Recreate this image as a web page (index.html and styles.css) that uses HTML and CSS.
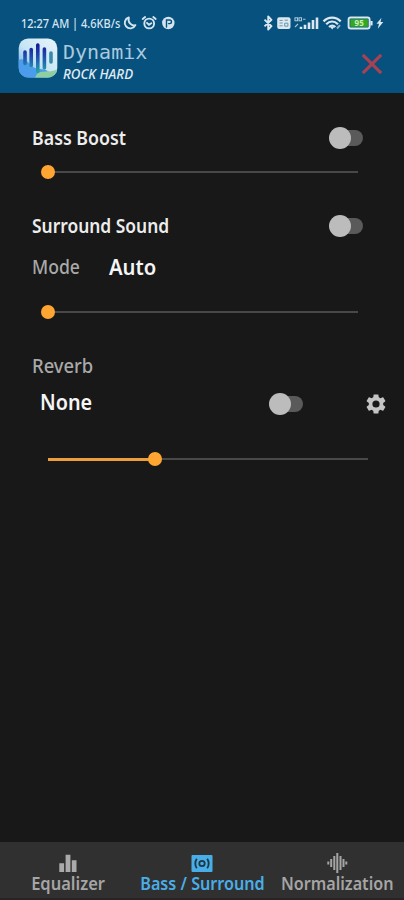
FILE: index.html
```html
<!DOCTYPE html>
<html lang="en">
<head>
<meta charset="utf-8">
<meta name="viewport" content="width=device-width">
<title>Dynamix</title>
<link rel="stylesheet" href="styles.css">
</head>
<body>
<div class="app">
  <header class="header">
    <div class="status">
      <span class="time"><span class="label">12:27 AM | 4.6KB/s</span></span>
      <svg class="left-icons" width="54" height="16" viewBox="0 0 54 16" fill="none" stroke="#d5e5ef" stroke-width="1.9" stroke-linecap="round">
        <path d="M5.8 2.4A5.6 5.6 0 1 0 12.4 10.2C8.6 11.6 4.6 7.5 5.8 2.4Z" stroke-linejoin="round"/>
        <circle cx="26.2" cy="8.5" r="4.9"/><path d="M24 7.8l2 2 2.3-1.5M19.7 4l2.4-2M32.7 4l-2.4-2"/>
        <circle cx="45.3" cy="8" r="6.2" fill="#d5e5ef" stroke="none"/><path d="M43.5 12V5h3.2c2.4 0 2.4 3.6 0 3.6h-1.2" stroke="#07517f" stroke-width="1.4"/>
      </svg>
      <svg class="right-icons" width="122" height="16" viewBox="0 0 122 16" fill="none" stroke="#dbe8f0" stroke-width="1.9">
        <path d="M2.5 4.6l7 6.6-3.3 3.3v-13l3.3 3.3-7 6.6" stroke-linejoin="round"/>
        <rect x="15.2" y="2.3" width="13.3" height="11.8" rx="2" fill="#dbe8f0" stroke="none"/>
        <path d="M17.5 5.4h3.2M17.5 8h3.2M17.5 10.8h3.2M22.7 5.2h3.2M22.7 8.2h3.2v3h-3.2z" stroke="#6c95af" stroke-width="1"/>
        <path d="M33 2.8h2.5v3H33zM37 2.8h2.5v3H37zM41 4.3h2.5M33 12l3-3" stroke="#a8c5d7" stroke-width="1.1"/>
        <path d="M39 14v-2.3M43 14v-4.2M47 14V7.5M51 14V5M55 14V2.5" stroke-width="2.6"/>
        <path d="M61.5 6.4c5-5 12.2-5 17.2 0M64.2 9.2c3.6-3.5 8.2-3.5 11.8 0M67 12c2-1.8 4.4-1.8 6.4 0" stroke-width="2.2"/>
        <path d="M70.2 14.4l-2-2.4h4z" fill="#dbe8f0" stroke="none"/><path d="M75 13.5l3-3.4" stroke="#8fb5cb"/>
        <rect x="86.6" y="2.5" width="21" height="11" rx="2"/><path d="M109.5 6v4.4" stroke-width="2.2"/>
        <rect x="88.3" y="4.2" width="17.6" height="7.6" fill="#35a91e" stroke="none"/>
        <text class="battery-text" x="92.6" y="11.1" fill="#c9efbf" stroke="none">95</text>
        <path d="M119.5 2.8l-5 6h2.5l-1.2 5 5.5-6.7h-2.8z" fill="#dbe8f0" stroke="none"/>
      </svg>
    </div>
    <div class="brand">
      <svg class="logo" width="40" height="40" viewBox="0 0 40 40">
        <defs>
          <linearGradient id="tile" x1="1" y1="0" x2="0" y2="1"><stop offset="0" stop-color="#e9f5fa"/><stop offset=".55" stop-color="#c6e5f4"/><stop offset="1" stop-color="#4a98ea"/></linearGradient>
          <linearGradient id="bars" gradientUnits="userSpaceOnUse" x1="0" y1="6" x2="0" y2="34"><stop offset="0" stop-color="#16169a"/><stop offset=".5" stop-color="#2054b0"/><stop offset="1" stop-color="#24a4a8"/></linearGradient>
          <clipPath id="round"><rect x=".7" y=".5" width="38.6" height="39" rx="9.5"/></clipPath>
        </defs>
        <g clip-path="url(#round)">
          <path d="M0 0h40v40H0z" fill="url(#tile)"/>
          <path d="M0 22c10-4 12 9 21 9s12 4 16 9H0z" fill="#4b9ceb"/>
          <path d="M17 40c4-11 11-3 23-9v9z" fill="#8fcea0"/>
        </g>
        <g fill="none" stroke="url(#bars)" stroke-width="3.6" stroke-linecap="round"><path d="M7 14l.01 11.5M13.2 11.5l.01 16M19.8 7l.01 26.5M26.4 11l.01 19"/></g>
        <path d="M33 15v9" stroke="#378aa8" stroke-width="3.6" stroke-linecap="round"/>
      </svg>
      <div class="names">
        <div class="name">Dynamix</div>
        <div class="tag"><span class="label">ROCK HARD</span></div>
      </div>
      <svg class="close" width="22" height="22" viewBox="0 0 22 22"><path d="M1.8 1.8l18.4 18.4M20.2 1.8L1.8 20.2" stroke="#a84251" stroke-width="3.1"/></svg>
    </div>
  </header>

  <main class="content">
    <section class="bass">
      <div class="row"><h2 class="title"><span class="label bass-label">Bass Boost</span></h2><span class="switch"></span></div>
      <div class="slider"><span class="thumb"></span></div>
    </section>
    <section class="surround">
      <div class="row"><h2 class="title"><span class="label surround-label">Surround Sound</span></h2><span class="switch"></span></div>
      <div class="mode"><span class="muted"><span class="label mode-label">Mode</span></span><span class="value"><span class="label auto-label">Auto</span></span></div>
      <div class="slider"><span class="thumb"></span></div>
    </section>
    <section class="reverb">
      <div class="muted reverb-heading"><span class="label reverb-label">Reverb</span></div>
      <div class="reverb-row">
        <span class="value"><span class="label none-label">None</span></span>
        <span class="switch"></span>
        <svg class="gear" width="24" height="24" viewBox="0 0 24 24"><path fill="#c4c4c4" d="M19.14 12.94c.04-.3.06-.61.06-.94s-.02-.64-.07-.94l2.03-1.58a.49.49 0 0 0 .12-.61l-1.92-3.32a.488.488 0 0 0-.59-.22l-2.39.96c-.5-.38-1.03-.7-1.62-.94l-.36-2.54a.484.484 0 0 0-.48-.41h-3.84c-.24 0-.43.17-.47.41l-.36 2.54c-.59.24-1.13.57-1.62.94l-2.39-.96c-.22-.08-.47 0-.59.22L2.74 8.87c-.12.21-.08.47.12.61l2.03 1.58c-.05.3-.09.63-.09.94s.02.64.07.94l-2.03 1.58a.49.49 0 0 0-.12.61l1.92 3.32c.12.22.37.29.59.22l2.39-.96c.5.38 1.03.7 1.62.94l.36 2.54c.05.24.24.41.48.41h3.84c.24 0 .44-.17.47-.41l.36-2.54c.59-.24 1.13-.56 1.62-.94l2.39.96c.22.08.47 0 .59-.22l1.92-3.32c.12-.22.07-.47-.12-.61l-2.01-1.58zM12 15.6A3.6 3.6 0 1 1 12 8.4a3.6 3.6 0 0 1 0 7.2z"/></svg>
      </div>
      <div class="slider wide"><span class="fill"></span><span class="thumb"></span></div>
    </section>
  </main>

  <nav class="tabs">
    <a class="tab">
      <svg width="22" height="22" viewBox="0 0 22 22" fill="#aaa"><path d="M2.3 11.3h4.8V20H2.3zM8.6 2.8h4.8V20H8.6zM14.8 8.2h4.7V20h-4.7z"/></svg>
      <span class="label eq-label">Equalizer</span>
    </a>
    <a class="tab active">
      <svg width="22" height="22" viewBox="0 0 22 22" fill="none" stroke="#203744" stroke-width="1.8"><rect x=".5" y="3" width="21" height="17" rx="1" fill="#49aee8" stroke="none"/><circle cx="11" cy="11.5" r="2.7"/><path d="M5.8 6.8c-2 3-2 6.4 0 9.4M16.2 6.8c2 3 2 6.4 0 9.4"/></svg>
      <span class="label bs-label">Bass / Surround</span>
    </a>
    <a class="tab">
      <svg width="22" height="22" viewBox="0 0 22 22" fill="none" stroke="#a5a5a5" stroke-width="2"><path d="M2.3 9.5v3M5.2 7v8M8.3 4v14M11.3 1v20M14.5 4v14M17.5 7v8M20.3 9.5v3"/></svg>
      <span class="label norm-label">Normalization</span>
    </a>
  </nav>
</div>
</body>
</html>
```
FILE: styles.css
```css
* { box-sizing: border-box; }
body { margin: 0; background: #181818; font-family: "Noto Sans", sans-serif; }
svg { display: block; flex: none; }
.app { width: 404px; height: 900px; display: flex; flex-direction: column; background: #181818; }
.label { display: inline-block; white-space: nowrap; transform-origin: left center; }

.header { height: 93px; background: #07517f; flex: none; padding-top: 15px; }
.status { height: 16px; display: flex; align-items: center; padding: 0 20px 0 21px; }
.time { width: 102px; font-size: 13px; line-height: 16px; font-weight: 500; color: #d5e5ef; }
.time .label { transform: scaleX(.845); }
.right-icons { margin-left: auto; }
.battery-text { font: bold 8px "Noto Sans", sans-serif; }
.brand { display: flex; height: 48px; padding: 7px 21px 0 18px; align-items: flex-start; }
.names { margin-left: 5px; flex: 1; }
.name { font: 20px/28px "DejaVu Sans Mono", monospace; color: #a9cade; }
.tag { font-size: 14px; line-height: 15px; font-style: italic; font-weight: 500; color: #e0ebf2; }
.tag .label { transform: scaleX(.95); }
.close { margin-top: 15px; }

.content { flex: 1; padding: 29px 16px 0 32px; }
.row { height: 32px; display: flex; align-items: center; justify-content: space-between; padding-right: 25px; }
.title { margin: 0; font-size: 20px; line-height: 30px; font-weight: 600; color: #ededed; }
.bass-label { transform: scaleX(.89); }
.surround-label { transform: scaleX(.87); }
.mode-label { transform: scaleX(.88); }
.auto-label { transform: translateY(-1px) scaleX(.92); }
.reverb-label { transform: scaleX(.92); }
.none-label { transform: translateY(-3px) scaleX(.9); }
.switch { width: 34px; height: 22px; display: flex; align-items: center; }
.switch::before { content: ""; flex: none; width: 22px; height: 22px; border-radius: 50%; background: #bcbcbc; z-index: 1; }
.switch::after { content: ""; flex: none; width: 25px; height: 16px; border-radius: 8px; margin-left: -13px; background: #5a5a5a; }
.slider { width: 310px; height: 14px; margin: 11px 0 0 16px; display: flex; align-items: center; background: linear-gradient(#484848, #484848) center / 100% 2px no-repeat; }
.thumb { width: 14px; height: 14px; border-radius: 50%; margin-left: -7px; background: #ffa532; }
.surround { margin-top: 31px; }
.mode { display: flex; height: 46px; align-items: center; padding-top: 3px; }
.mode .muted { width: 77px; }
.muted { color: #a9a9a9; font-size: 20px; line-height: 28px; font-weight: 500; }
.value { color: #f5f5f5; font-size: 22px; line-height: 30px; font-weight: 600; }
.surround .slider { margin-top: 17px; }
.reverb-heading { margin-top: 33px; }
.reverb-row { height: 36px; display: flex; align-items: center; padding-left: 8px; margin-top: 6px; }
.reverb-row .value { width: 229px; }
.gear { margin-left: 61px; }
.wide { width: 320px; margin-top: 30px; }
.fill { width: 107px; height: 3px; background: #ec9d3c; }

.tabs { height: 58px; display: grid; grid-template-columns: 135px 134px 135px; background: #303030; border-bottom: 2px solid #2a2326; }
.tab { display: flex; flex-direction: column; align-items: center; padding-top: 10px; color: #a5a5a5; font-size: 17px; line-height: 20px; font-weight: 600; }
.tab .label { transform-origin: center; }
.eq-label { transform: translateX(1px) scaleX(.97); }
.bs-label { transform: scaleX(.95); }
.norm-label { transform: translateX(1px) scaleX(.95); }
.active { color: #49aee8; }
```
